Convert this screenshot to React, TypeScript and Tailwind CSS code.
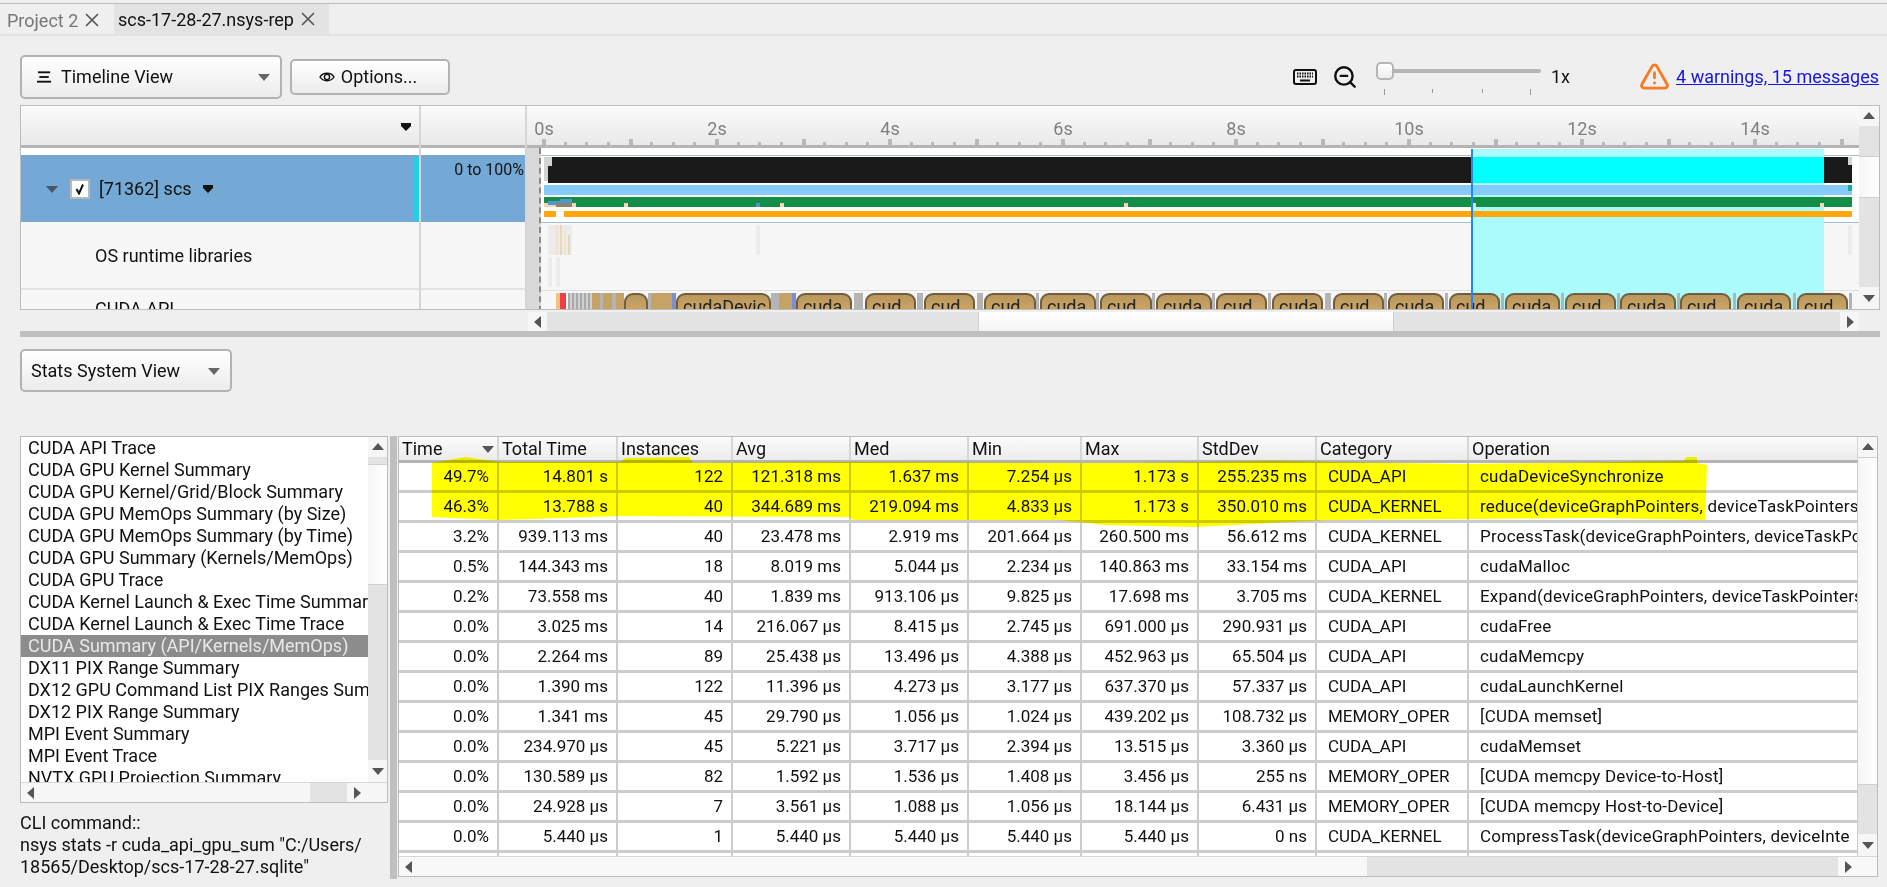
import { TriangleAlert, X, ZoomOut } from "lucide-react";

// track positions below are page x minus the left edge of the timeline canvas
const TRACK_X = 527;
const SEC = 86.5;

const chips: [number, number, string][] = [
  [624, 24, ""],
  [676, 95, "cudaDevic"],
  [796, 56, "cuda"],
  [865, 51, "cud"],
  [924, 51, "cud"],
  [984, 52, "cud"],
  [1040, 56, "cuda"],
  [1100, 52, "cud"],
  [1156, 56, "cuda"],
  [1216, 51, "cud"],
  [1272, 51, "cuda"],
  [1333, 51, "cud"],
  [1388, 56, "cuda"],
  [1449, 51, "cud"],
  [1505, 55, "cuda"],
  [1565, 51, "cud"],
  [1620, 56, "cuda"],
  [1680, 51, "cud"],
  [1737, 54, "cuda"],
  [1797, 51, "cud"],
];

const strips: [number, number, string][] = [
  [556, 4, "#f4c27c"],
  [560, 6, "#ef3e4a"],
  [592, 32, "#c5a266"],
  [600, 3, "#b4b4b4"],
  [612, 4, "#b4b4b4"],
  [648, 28, "#c5a266"],
  [648, 3, "#b4b4b4"],
  [672, 4, "#7b8fcf"],
  [771, 25, "#c5a266"],
  [771, 8, "#b4b4b4"],
  [792, 4, "#7b8fcf"],
  [854, 9, "#b4b4b4"],
  [917, 6, "#b4b4b4"],
  [977, 6, "#b4b4b4"],
  [1036, 3, "#b4b4b4"],
  [1096, 3, "#b4b4b4"],
  [1152, 3, "#b4b4b4"],
  [1212, 3, "#b4b4b4"],
  [1268, 3, "#b4b4b4"],
  [1325, 6, "#b4b4b4"],
  [1384, 3, "#b4b4b4"],
  [1445, 3, "#b4b4b4"],
  [1501, 3, "#b4b4b4"],
  [1561, 3, "#b4b4b4"],
  [1617, 3, "#b4b4b4"],
  [1677, 3, "#b4b4b4"],
  [1733, 3, "#b4b4b4"],
  [1793, 3, "#b4b4b4"],
  [1849, 3, "#b4b4b4"],
];

const listItems = [
  "CUDA API Trace",
  "CUDA GPU Kernel Summary",
  "CUDA GPU Kernel/Grid/Block Summary",
  "CUDA GPU MemOps Summary (by Size)",
  "CUDA GPU MemOps Summary (by Time)",
  "CUDA GPU Summary (Kernels/MemOps)",
  "CUDA GPU Trace",
  "CUDA Kernel Launch & Exec Time Summary",
  "CUDA Kernel Launch & Exec Time Trace",
  "CUDA Summary (API/Kernels/MemOps)",
  "DX11 PIX Range Summary",
  "DX12 GPU Command List PIX Ranges Summary",
  "DX12 PIX Range Summary",
  "MPI Event Summary",
  "MPI Event Trace",
  "NVTX GPU Projection Summary",
];

const columns = [
  { name: "Time", width: "w-[100px]" },
  { name: "Total Time", width: "w-[119px]" },
  { name: "Instances", width: "w-[115px]" },
  { name: "Avg", width: "w-[118px]" },
  { name: "Med", width: "w-[118px]" },
  { name: "Min", width: "w-[113px]" },
  { name: "Max", width: "w-[117px]" },
  { name: "StdDev", width: "w-[118px]" },
  { name: "Category", width: "w-[152px]" },
  { name: "Operation", width: "w-[390px]" },
];

const rows = [
  ["49.7%", "14.801 s", "122", "121.318 ms", "1.637 ms", "7.254 μs", "1.173 s", "255.235 ms", "CUDA_API", "cudaDeviceSynchronize"],
  ["46.3%", "13.788 s", "40", "344.689 ms", "219.094 ms", "4.833 μs", "1.173 s", "350.010 ms", "CUDA_KERNEL", "reduce(deviceGraphPointers, deviceTaskPointers, deviceInte"],
  ["3.2%", "939.113 ms", "40", "23.478 ms", "2.919 ms", "201.664 μs", "260.500 ms", "56.612 ms", "CUDA_KERNEL", "ProcessTask(deviceGraphPointers, deviceTaskPointers, deviceInte"],
  ["0.5%", "144.343 ms", "18", "8.019 ms", "5.044 μs", "2.234 μs", "140.863 ms", "33.154 ms", "CUDA_API", "cudaMalloc"],
  ["0.2%", "73.558 ms", "40", "1.839 ms", "913.106 μs", "9.825 μs", "17.698 ms", "3.705 ms", "CUDA_KERNEL", "Expand(deviceGraphPointers, deviceTaskPointers, deviceInte"],
  ["0.0%", "3.025 ms", "14", "216.067 μs", "8.415 μs", "2.745 μs", "691.000 μs", "290.931 μs", "CUDA_API", "cudaFree"],
  ["0.0%", "2.264 ms", "89", "25.438 μs", "13.496 μs", "4.388 μs", "452.963 μs", "65.504 μs", "CUDA_API", "cudaMemcpy"],
  ["0.0%", "1.390 ms", "122", "11.396 μs", "4.273 μs", "3.177 μs", "637.370 μs", "57.337 μs", "CUDA_API", "cudaLaunchKernel"],
  ["0.0%", "1.341 ms", "45", "29.790 μs", "1.056 μs", "1.024 μs", "439.202 μs", "108.732 μs", "MEMORY_OPER", "[CUDA memset]"],
  ["0.0%", "234.970 μs", "45", "5.221 μs", "3.717 μs", "2.394 μs", "13.515 μs", "3.360 μs", "CUDA_API", "cudaMemset"],
  ["0.0%", "130.589 μs", "82", "1.592 μs", "1.536 μs", "1.408 μs", "3.456 μs", "255 ns", "MEMORY_OPER", "[CUDA memcpy Device-to-Host]"],
  ["0.0%", "24.928 μs", "7", "3.561 μs", "1.088 μs", "1.056 μs", "18.144 μs", "6.431 μs", "MEMORY_OPER", "[CUDA memcpy Host-to-Device]"],
  ["0.0%", "5.440 μs", "1", "5.440 μs", "5.440 μs", "5.440 μs", "5.440 μs", "0 ns", "CUDA_KERNEL", "CompressTask(deviceGraphPointers, deviceInte"],
  ["", "", "", "", "", "", "", "", "", ""],
];

const Tri = ({ dir, className = "fill-[#555]" }: { dir: "up" | "down" | "left" | "right"; className?: string }) => {
  const points = { up: "0,9 6,2 12,9", down: "0,3 6,10 12,3", left: "9,0 2,6 9,12", right: "3,0 10,6 3,12" }[dir];
  return (
    <svg viewBox="0 0 12 12" className={`h-3 w-3 shrink-0 ${className}`}>
      <polygon points={points} />
    </svg>
  );
};

const SmallTri = ({ className = "" }: { className?: string }) => (
  <svg viewBox="0 0 10 8" className={`h-2 w-[10px] shrink-0 fill-[#111] ${className}`}>
    <polygon points="0,0 10,0 10,3 5,8 0,3" />
  </svg>
);

const Box = ({ x, y, w, h, className }: { x: number; y: number; w: number; h: number; className: string }) => (
  <div
    className={`absolute ${className}`}
    style={{ left: x - TRACK_X, top: y - 106, width: w, height: h }}
  />
);

const Ruler = () => {
  const ticks = Array.from({ length: 61 }, (_, i) => i);
  const labels = [0, 2, 4, 6, 8, 10, 12, 14];
  return (
    <div className="relative h-[42px] border-b-[3px] border-[#b4b4b4] bg-gradient-to-b from-[#fbfbfb] to-[#e9e9e9]">
      {labels.map((s) => (
        <span
          key={s}
          className="absolute top-[13px] -translate-x-1/2 text-[18px] leading-5 text-[#808080]"
          style={{ left: 544 - TRACK_X + s * SEC }}
        >
          {s}s
        </span>
      ))}
      {ticks.map((i) => (
        <div
          key={i}
          className={`absolute bottom-0 bg-[#b8b8b8] ${i % 4 === 0 ? "h-[6px] w-[4px]" : "h-[3px] w-[3px]"}`}
          style={{ left: 542 - TRACK_X + (i * SEC) / 4 }}
        />
      ))}
    </div>
  );
};

const Tracks = () => (
  <div className="relative flex-1 overflow-hidden bg-[#f7f7f7]">
    <Ruler />
    <Box x={527} y={148} w={1332} h={7} className="bg-white" />
    <Box x={527} y={155} w={1332} h={68} className="border-y border-[#a3bfd8] bg-white" />
    <Box x={527} y={290} w={1332} h={1} className="bg-[#dfdfdf]" />
    <Box x={527} y={148} w={14} h={164} className="border-r-2 border-dashed border-[#8a8a8a] bg-[#d9d9d9]" />
    <Box x={1472} y={149} w={352} h={162} className="bg-[#aafbfb]" />

    <Box x={544} y={157} w={4} h={24} className="bg-[#d4d4d4]" />
    <Box x={548} y={157} w={4} h={9} className="bg-[#d4d4d4]" />
    <Box x={548} y={166} w={4} h={17} className="bg-[#1a1a1a]" />
    <Box x={552} y={157} w={920} h={26} className="bg-[#1a1a1a]" />
    <Box x={1472} y={157} w={352} h={26} className="bg-[#00ffff]" />
    <Box x={1824} y={157} w={28} h={26} className="bg-[#1a1a1a]" />
    <Box x={1848} y={157} w={4} h={8} className="bg-[#d4d4d4]" />
    <Box x={544} y={185} w={1308} h={10} className="bg-[#85caf9]" />
    <Box x={1848} y={185} w={4} h={6} className="bg-[#1aa89a]" />
    <Box x={544} y={197} w={1308} h={10} className="bg-[#128e47]" />
    <Box x={544} y={203} w={32} h={4} className="bg-[#fbd3b4]" />
    <Box x={548} y={201} w={24} h={4} className="bg-[#4f97cf]" />
    <Box x={560} y={199} w={12} h={4} className="bg-[#4f97cf]" />
    <Box x={556} y={203} w={16} h={4} className="bg-[#94806e]" />
    <Box x={624} y={203} w={4} h={4} className="bg-[#fbd3b4]" />
    <Box x={756} y={203} w={4} h={4} className="bg-[#4f97cf]" />
    <Box x={780} y={203} w={4} h={4} className="bg-[#fbd3b4]" />
    <Box x={1124} y={203} w={4} h={4} className="bg-[#fbd3b4]" />
    <Box x={1472} y={203} w={4} h={4} className="bg-[#fbd3b4]" />
    <Box x={1820} y={203} w={4} h={4} className="bg-[#fbd3b4]" />
    <Box x={544} y={211} w={12} h={6} className="bg-[repeating-linear-gradient(90deg,#ffa60d_0_3px,#e2aa5e_3px_4px)]" />
    <Box x={564} y={211} w={1288} h={6} className="bg-[repeating-linear-gradient(90deg,#ffa60d_0_3px,#e2aa5e_3px_4px)]" />

    <Box x={548} y={225} w={24} h={30} className="bg-[#ececec]" />
    <Box x={556} y={225} w={2} h={30} className="bg-[#f3e3c8]" />
    <Box x={560} y={225} w={2} h={30} className="bg-[#e5d6bc]" />
    <Box x={564} y={231} w={2} h={24} className="bg-[#f3e3c8]" />
    <Box x={568} y={235} w={2} h={20} className="bg-[#e5d6bc]" />
    <Box x={756} y={225} w={4} h={30} className="bg-[#ececec]" />
    <Box x={1848} y={225} w={4} h={30} className="bg-[#ececec]" />
    <Box x={548} y={257} w={4} h={30} className="bg-[#ececec]" />
    <Box x={556} y={257} w={4} h={30} className="bg-[#ececec]" />

    <Box x={568} y={293} w={24} h={16} className="bg-[repeating-linear-gradient(90deg,#a9a9a9_0_2px,#cfcfcf_2px_4px)]" />
    {strips.map(([x, w, color], i) => (
      <div
        key={i}
        className="absolute top-[187px] h-[16px]"
        style={{ left: x - TRACK_X, width: w, backgroundColor: color }}
      />
    ))}
    {chips.map(([x, w, label]) => (
      <div
        key={x}
        className="absolute top-[187px] h-[22px] overflow-hidden rounded-t-[9px] border-2 border-[#725d3c] bg-gradient-to-b from-[#b8965f] to-[#d0a862] pl-[5px] text-[18px] leading-[24px] text-[#222]"
        style={{ left: x - TRACK_X, width: w }}
      >
        {label}
      </div>
    ))}
    <Box x={1471} y={149} w={2} h={162} className="bg-[#1e88f5]" />
  </div>
);

const VerticalBar = ({ thumbTop, thumbHeight, className = "" }: { thumbTop: number; thumbHeight: number; className?: string }) => (
  <div className={`flex flex-col bg-[#e3e3e3] ${className}`}>
    <div className="flex h-[20px] items-center justify-center bg-[#f6f6f6]">
      <Tri dir="up" />
    </div>
    <div className="relative flex-1">
      <div
        className="absolute inset-x-0 border-y border-[#cfcfcf] bg-gradient-to-r from-[#f6f6f6] to-white"
        style={{ top: thumbTop, height: thumbHeight }}
      />
    </div>
    <div className="flex h-[22px] items-center justify-center bg-[#f6f6f6]">
      <Tri dir="down" />
    </div>
  </div>
);

const ComboButton = ({ label, className, menu }: { label: string; className: string; menu?: boolean }) => (
  <div
    className={`flex items-center rounded-[5px] border-2 border-[#b2b2b2] bg-gradient-to-b from-white to-[#ececec] text-[18px] text-[#111] ${className}`}
  >
    {menu && (
      <svg viewBox="0 0 16 12" className="ml-[15px] mr-[9px] h-3 w-[15px] fill-[#111]">
        <rect x="1" y="0" width="13" height="2" />
        <rect x="2.5" y="5" width="10" height="2" />
        <rect x="0" y="10" width="15" height="2" />
      </svg>
    )}
    <span className="whitespace-nowrap">{label}</span>
    <Tri dir="down" className="ml-auto mr-[10px] fill-[#666]" />
  </div>
);

export default function App() {
  return (
    <div className="h-[887px] w-[1887px] overflow-hidden bg-[#efefef] pt-[3px] font-['Roboto',sans-serif] text-[16px] text-[#111]">
      <div className="flex h-[33px] items-end border-t border-b-2 border-t-[#bcbcbc] border-b-[#e3e3e3] pl-[2px]">
        <div className="flex h-[30px] w-[112px] items-center pl-[5px] pt-[2px] text-[18px] text-[#777]">
          Project 2
          <X size={22} strokeWidth={1.8} className="ml-[3px] text-[#555]" />
        </div>
        <div className="flex h-[30px] w-[215px] items-center bg-[#e3e3e3] pl-[4px] text-[18px]">
          scs-17-28-27.nsys-rep
          <X size={22} strokeWidth={1.8} className="ml-[3px] text-[#555]" />
        </div>
      </div>

      <div className="flex h-[69px] items-center pl-5 pt-[12px]">
        <ComboButton label="Timeline View" menu className="h-[44px] w-[262px]" />
        <div className="ml-2 flex h-[36px] w-[160px] items-center justify-center gap-[6px] rounded-[5px] border-2 border-[#b2b2b2] bg-gradient-to-b from-white to-[#ececec] pr-[4px] text-[18px]">
          <svg viewBox="0 0 16 12" className="h-3 w-4 fill-none stroke-[#111] stroke-[1.4]">
            <path d="M1 6 C4 1 12 1 15 6 C12 11 4 11 1 6 Z" />
            <circle cx="8" cy="6" r="2.6" />
          </svg>
          Options...
        </div>
        <svg viewBox="0 0 24 16" className="ml-[843px] h-4 w-6">
          <rect x="1" y="1" width="22" height="14" rx="2" className="fill-none stroke-[#111] stroke-2" />
          <path d="M4 4.5h16M4 7.5h16" className="stroke-[#111] stroke-2 [stroke-dasharray:1.5_1]" />
          <rect x="7" y="10.5" width="10" height="2" className="fill-[#111]" />
        </svg>
        <ZoomOut size={26} strokeWidth={2.2} className="ml-[15px] text-[#111]" />
        <div className="relative ml-[18px] mt-[14px] h-[36px] w-[165px] self-start">
          <div className="absolute left-[8px] right-0 top-[7px] h-[4px] rounded bg-[#b5b5b5]" />
          <div className="absolute left-0 top-0 h-[18px] w-[18px] rounded-[5px] border-2 border-[#b5b5b5] bg-gradient-to-b from-white to-[#eeeeee]" />
          <div className="absolute left-[8px] top-[27px] h-[6px] w-px bg-[#999]" />
          <div className="absolute left-[56px] top-[27px] h-[4px] w-px bg-[#999]" />
          <div className="absolute left-[106px] top-[27px] h-[4px] w-px bg-[#999]" />
          <div className="absolute left-[154px] top-[27px] h-[6px] w-px bg-[#999]" />
        </div>
        <span className="ml-[10px] text-[18px]">1x</span>
        <TriangleAlert size={31} strokeWidth={2.2} className="ml-[69px] text-[#f97a1f]" />
        <span className="ml-[6px] whitespace-nowrap text-[18px] text-[#1414e6] underline">4 warnings, 15 messages</span>
      </div>

      <div className="ml-5 flex h-[205px] w-[1860px] overflow-hidden border border-[#bcbcbc] bg-[#f7f7f7]">
        <div className="flex w-[400px] flex-col border-r-2 border-[#d6d6d6]">
          <div className="flex h-[42px] shrink-0 items-center justify-end border-b-[3px] border-[#b4b4b4] bg-gradient-to-b from-[#fbfbfb] to-[#e9e9e9] pr-2 pt-[3px]">
            <SmallTri />
          </div>
          <div className="h-[7px] shrink-0 bg-white" />
          <div className="flex h-[67px] shrink-0 items-center bg-[#75a9d5] text-[18px]">
            <Tri dir="down" className="ml-[25px] fill-[#44586b]" />
            <div className="ml-[12px] flex h-[20px] w-[20px] items-center justify-center border-2 border-[#b9b9b9] bg-white">
              <svg viewBox="0 0 12 12" className="h-3 w-3 fill-none stroke-[#111] stroke-2">
                <path d="M2.5 6 L5 10.5 L9 1.5" />
              </svg>
            </div>
            <span className="ml-[9px]">[71362] scs</span>
            <SmallTri className="ml-[11px]" />
            <div className="ml-auto h-[64px] w-[5px] bg-[#25cfe9]" />
          </div>
          <div className="flex h-[68px] shrink-0 items-center border-b-2 border-[#e3e3e3] pl-[74px] text-[18px]">OS runtime libraries</div>
          <div className="h-[20px] overflow-hidden pl-[74px] pt-[7px] text-[18px] leading-[24px]">CUDA API</div>
        </div>
        <div className="flex w-[106px] flex-col border-r-2 border-[#d6d6d6]">
          <div className="h-[42px] shrink-0 border-b-[3px] border-[#b4b4b4] bg-gradient-to-b from-[#fbfbfb] to-[#e9e9e9]" />
          <div className="h-[7px] shrink-0 bg-white" />
          <div className="h-[67px] shrink-0 bg-[#75a9d5] pr-[1px] pt-[3px] text-right text-[16px]">0 to 100%</div>
          <div className="h-[68px] shrink-0 border-b-2 border-[#e3e3e3]" />
        </div>
        <Tracks />
        <VerticalBar thumbTop={30} thumbHeight={42} className="w-[20px] shrink-0" />
      </div>

      <div className="ml-[528px] mt-[2px] flex h-[19px] w-[1331px] bg-[#e3e3e3]">
        <div className="flex w-[19px] items-center justify-center bg-[#f6f6f6]">
          <Tri dir="left" />
        </div>
        <div className="ml-[431px] h-full w-[416px] border-x border-[#cfcfcf] bg-gradient-to-b from-white to-[#f4f4f4]" />
        <div className="ml-auto flex w-[19px] items-center justify-center bg-[#f6f6f6]">
          <Tri dir="right" />
        </div>
      </div>
      <div className="ml-5 h-[6px] w-[1860px] bg-[#bfbfbf]" />

      <div className="ml-5 mt-3 flex h-[43px] w-[212px] items-center">
        <ComboButton label="Stats System View" className="h-full w-full pl-[9px]" />
      </div>

      <div className="mt-[44px] flex h-[443px] pl-5">
        <div className="w-[368px] shrink-0">
          <div className="flex h-[367px] flex-col border border-[#bcbcbc] bg-white">
            <div className="flex min-h-0 flex-1">
              <div className="w-[347px] overflow-hidden">
                {listItems.map((item) => (
                  <div
                    key={item}
                    className={`h-[22px] whitespace-nowrap pl-[7px] text-[18px] leading-[22px] ${item.startsWith("CUDA Summary") ? "bg-[#8c8c8c] text-[#e8e8e8]" : ""}`}
                  >
                    {item}
                  </div>
                ))}
              </div>
              <VerticalBar thumbTop={7} thumbHeight={121} className="w-[19px] shrink-0 flex-1" />
            </div>
            <div className="flex h-[20px] shrink-0 border-t border-[#d6d6d6] bg-[#f7f7f7]">
              <div className="flex w-[19px] items-center justify-center">
                <Tri dir="left" />
              </div>
              <div className="ml-[270px] w-[37px] bg-[#e3e3e3]" />
              <div className="flex w-[19px] items-center justify-center">
                <Tri dir="right" />
              </div>
            </div>
          </div>
          <div className="mt-[9px] w-[348px] whitespace-nowrap text-[18px] leading-[22px]">
            CLI command::
            <br />
            nsys stats -r cuda_api_gpu_sum "C:/Users/
            <br />
            18565/Desktop/scs-17-28-27.sqlite"
          </div>
        </div>

        <div className="ml-[2px] h-full w-[7px] shrink-0 bg-[#bfbfbf]" />

        <div className="relative ml-[1px] flex h-[441px] w-[1480px] flex-col border border-[#bcbcbc] bg-white">
          <div className="flex min-h-0 flex-1">
            <div className="w-[1459px] overflow-hidden">
              <div className="flex h-[26px] border-b-[3px] border-[#b4b4b4] bg-gradient-to-b from-[#fbfbfb] to-[#ececec]">
                {columns.map((col, i) => (
                  <div
                    key={col.name}
                    className={`relative flex shrink-0 items-center border-r-2 border-[#d6d6d6] pl-[3px] text-[18px] ${col.width}`}
                  >
                    {col.name}
                    {i === 0 && <Tri dir="down" className="absolute right-[3px] fill-[#555]" />}
                  </div>
                ))}
              </div>
              {rows.map((row, r) => (
                <div key={r} className="flex h-[30px] border-b-[3px] border-[#cccccc]">
                  {row.map((cell, i) => (
                    <div
                      key={i}
                      className={`shrink-0 overflow-hidden whitespace-nowrap border-r-2 border-[#cccccc] text-[17px] leading-[27px] ${columns[i].width} ${i < 8 ? "pr-[8px] text-right" : "pl-[11px]"} ${i === 9 ? "tracking-[0.012em]" : ""}`}
                    >
                      {cell}
                    </div>
                  ))}
                </div>
              ))}
            </div>
            <VerticalBar thumbTop={0} thumbHeight={328} className="w-[19px] shrink-0 flex-1" />
          </div>
          <div className="z-10 flex h-[20px] shrink-0 border-t border-[#d6d6d6] bg-[#f8f8f8]">
            <div className="flex w-[19px] items-center justify-center">
              <Tri dir="left" />
            </div>
            <div className="ml-[949px] w-[471px] bg-[#e3e3e3]" />
            <div className="flex w-[19px] items-center justify-center">
              <Tri dir="right" />
            </div>
          </div>
          {/* highlighter scribble over the two top rows */}
          <svg className="pointer-events-none absolute left-[-399px] top-[-437px] h-[887px] w-[1887px] mix-blend-multiply">
            <path
              d="M432 463 L465 457 L500 462 L620 462 L626 458 L689 457 L693 463 L849 462 L1060 463 L1136 463 L1270 461 L1462 464 L1551 463 L1683 461 L1687 457 L1697 457 L1697 463 L1707 465 L1706 492 L1705 520 L1596 518 L1471 519 L1328 520 L1194 527 L1105 525 L1060 520 L967 520 L853 520 L849 517 L620 516 L498 520 L432 517 Z"
              fill="#ffff00"
            />
          </svg>
        </div>
      </div>
    </div>
  );
}
